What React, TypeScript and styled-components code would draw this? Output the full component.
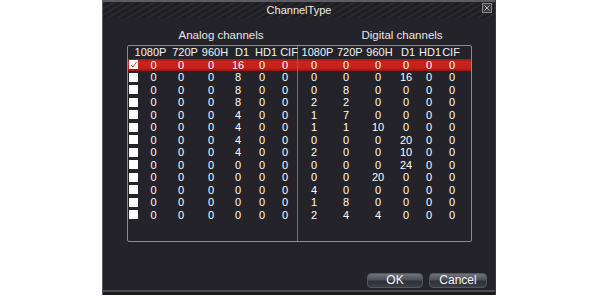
import React from "react";
import styled, { createGlobalStyle } from "styled-components";

const analog = [
  [0, 0, 0, 16, 0, 0],
  [0, 0, 0, 8, 0, 0],
  [0, 0, 0, 8, 0, 0],
  [0, 0, 0, 8, 0, 0],
  [0, 0, 0, 4, 0, 0],
  [0, 0, 0, 4, 0, 0],
  [0, 0, 0, 4, 0, 0],
  [0, 0, 0, 4, 0, 0],
  [0, 0, 0, 0, 0, 0],
  [0, 0, 0, 0, 0, 0],
  [0, 0, 0, 0, 0, 0],
  [0, 0, 0, 0, 0, 0],
  [0, 0, 0, 0, 0, 0],
];

const digital = [
  [0, 0, 0, 0, 0, 0],
  [0, 0, 0, 16, 0, 0],
  [0, 8, 0, 0, 0, 0],
  [2, 2, 0, 0, 0, 0],
  [1, 7, 0, 0, 0, 0],
  [1, 1, 10, 0, 0, 0],
  [0, 0, 0, 20, 0, 0],
  [2, 0, 0, 10, 0, 0],
  [0, 0, 0, 24, 0, 0],
  [0, 0, 20, 0, 0, 0],
  [4, 0, 0, 0, 0, 0],
  [1, 8, 0, 0, 0, 0],
  [2, 4, 4, 0, 0, 0],
];

const headers = ["1080P", "720P", "960H", "D1", "HD1", "CIF"];

const GlobalStyle = createGlobalStyle`
  body {
    margin: 0;
    background: #ffffff;
    font-family: "Liberation Sans", Arial, sans-serif;
  }
`;

const Page = styled.div`
  width: 600px;
  height: 300px;
  padding-left: 102px;
  box-sizing: border-box;
`;

const Window = styled.div`
  width: 394px;
  height: 295px;
  box-sizing: border-box;
  background: #24232a;
  border-left: 1px solid #5a5a60;
  border-right: 1px solid #3a3a40;
  display: flex;
  flex-direction: column;
  position: relative;
  box-shadow: inset 0 -3px 0 #1a1a1e, inset 0 -5px 0 #4a4a50;
`;

const TitleBar = styled.div`
  height: 18px;
  box-sizing: border-box;
  border-top: 2px solid #5c5c62;
  background: repeating-linear-gradient(
    150deg,
    #29292e 0px,
    #29292e 2px,
    #1f1f23 2px,
    #1f1f23 5px
  );
  color: #ececec;
  font-size: 11px;
  line-height: 16px;
  text-align: center;
`;

const CloseBox = styled.div`
  position: absolute;
  right: 3px;
  top: 3px;
  width: 10px;
  height: 10px;
  box-sizing: border-box;
  border: 1px solid #8a8a8e;
  background: #3a3a3e;
  display: flex;
  align-items: center;
  justify-content: center;
`;

const Body = styled.div`
  flex: 1;
  padding: 11px 0 0 24px;
  display: flex;
  flex-direction: column;
`;

const Titles = styled.div`
  display: grid;
  grid-template-columns: 188px 174px;
  height: 13px;
  line-height: 13px;
  font-size: 11.5px;
  color: #e6e6e6;
  text-align: center;
  margin-bottom: 3px;
`;

const Panel = styled.div`
  width: 345px;
  height: 197px;
  box-sizing: border-box;
  border: 1px solid #8c8c92;
  border-radius: 2px;
  display: flex;
`;

const Half = styled.div<{ $divider?: boolean }>`
  width: ${(p) => (p.$divider ? "170px" : "174px")};
  box-sizing: border-box;
  border-right: ${(p) => (p.$divider ? "1px solid #6e6e74" : "none")};
`;

const HeaderRow = styled.div<{ $cols: string; $pad: number }>`
  display: grid;
  grid-template-columns: ${(p) => p.$cols};
  padding-left: ${(p) => p.$pad}px;
  height: 12.5px;
  line-height: 12px;
  font-size: 11px;
  color: #f4f4f4;
  text-align: center;
  white-space: nowrap;
`;

const Row = styled.div<{ $cols: string; $active?: boolean }>`
  display: grid;
  grid-template-columns: ${(p) => p.$cols};
  height: 12.5px;
  align-items: center;
  font-size: 11px;
  color: #ffffff;
  text-align: center;
  background: ${(p) =>
    p.$active
      ? "linear-gradient(#9c1814, #cc241e 25%, #c4211c 75%, #981611)"
      : "transparent"};
`;

const Check = styled.div`
  width: 9px;
  height: 9px;
  margin-left: 1px;
  background: #ffffff;
  display: flex;
  align-items: center;
  justify-content: center;
`;

const Footer = styled.div`
  display: flex;
  justify-content: flex-end;
  gap: 6px;
  margin-top: 31px;
  padding-right: 8px;
`;

const Button = styled.button<{ $w: number }>`
  width: ${(p) => p.$w}px;
  height: 15px;
  padding: 0;
  border: 1px solid #55575e;
  border-radius: 4px;
  background: linear-gradient(#70737b, #4d5058 45%, #2f3137 55%, #3c3e45);
  color: #f4f4f4;
  font-family: "Liberation Sans", Arial, sans-serif;
  font-size: 12px;
  line-height: 13px;
`;

const leftCols = "14px 23px 32px 28px 26px 22px 24px";
const leftHead = "37px 32px 28px 26px 22px 24px";
const rightCols = "32px 32px 32px 24px 22px 24px";
const rightHead = "39px 25px 35px 22px 18px 28px";

const CheckMark = () => (
  <svg width="7" height="7" viewBox="0 0 7 7">
    <path d="M1 4 L3 6 L6.5 1" stroke="#d23a34" strokeWidth="1" fill="none" />
  </svg>
);

const App = () => {
  return (
    <Page>
      <GlobalStyle />
      <Window>
        <TitleBar>ChannelType</TitleBar>
        <CloseBox>
          <svg width="6" height="6" viewBox="0 0 6 6">
            <path d="M0.5 0.5 L5.5 5.5 M5.5 0.5 L0.5 5.5" stroke="#b0b0b4" strokeWidth="1" />
          </svg>
        </CloseBox>
        <Body>
          <Titles>
            <span>Analog channels</span>
            <span>Digital channels</span>
          </Titles>
          <Panel>
            <Half $divider>
              <HeaderRow $cols={leftHead} $pad={4}>
                {headers.map((h) => (
                  <span key={h}>{h}</span>
                ))}
              </HeaderRow>
              {analog.map((r, i) => (
                <Row key={i} $cols={leftCols} $active={i === 0}>
                  <Check>{i === 0 && <CheckMark />}</Check>
                  {r.map((v, j) => (
                    <span key={j}>{v}</span>
                  ))}
                </Row>
              ))}
            </Half>
            <Half>
              <HeaderRow $cols={rightHead} $pad={0}>
                {headers.map((h) => (
                  <span key={h}>{h}</span>
                ))}
              </HeaderRow>
              {digital.map((r, i) => (
                <Row key={i} $cols={rightCols} $active={i === 0}>
                  {r.map((v, j) => (
                    <span key={j}>{v}</span>
                  ))}
                </Row>
              ))}
            </Half>
          </Panel>
          <Footer>
            <Button $w={56}>OK</Button>
            <Button $w={58}>Cancel</Button>
          </Footer>
        </Body>
      </Window>
    </Page>
  );
};

export default App;
